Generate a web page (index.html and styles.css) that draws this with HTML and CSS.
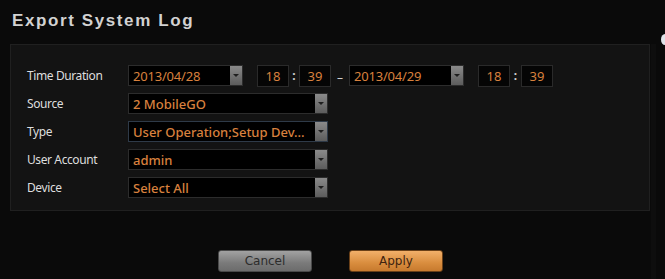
FILE: index.html
```html
<!DOCTYPE html>
<html>
<head>
<meta charset="utf-8">
<link rel="stylesheet" href="styles.css">
</head>
<body>
<div class="dialog">
  <h1 class="title">Export System Log</h1>
  <div class="panel">
    <div class="row">
      <div class="label">Time Duration</div>
      <div class="select date"><span class="val">2013/04/28</span><span class="arrow"></span></div>
      <div class="time first">18</div>
      <div class="colon">:</div>
      <div class="time">39</div>
      <div class="tilde">–</div>
      <div class="select date"><span class="val">2013/04/29</span><span class="arrow"></span></div>
      <div class="time first">18</div>
      <div class="colon wide-colon">:</div>
      <div class="time">39</div>
    </div>
    <div class="row">
      <div class="label">Source</div>
      <div class="select wide"><span class="val">2 MobileGO</span><span class="arrow"></span></div>
    </div>
    <div class="row">
      <div class="label">Type</div>
      <div class="select wide focus"><span class="val">User Operation;Setup Dev...</span><span class="arrow"></span></div>
    </div>
    <div class="row">
      <div class="label">User Account</div>
      <div class="select wide"><span class="val">admin</span><span class="arrow"></span></div>
    </div>
    <div class="row">
      <div class="label">Device</div>
      <div class="select wide"><span class="val">Select All</span><span class="arrow"></span></div>
    </div>
  </div>
  <div class="buttons">
    <button class="btn cancel">Cancel</button>
    <button class="btn apply">Apply</button>
  </div>
  <div class="edge"></div>
  <div class="corner"></div>
</div>
</body>
</html>
```
FILE: styles.css
```css
html, body {
  margin: 0;
  padding: 0;
  background: #0a0a0a;
}
.dialog {
  position: relative;
  width: 665px;
  height: 279px;
  overflow: hidden;
  font-family: "Noto Sans", "Open Sans", sans-serif;
}
.title {
  margin: 0;
  height: 44px;
  box-sizing: border-box;
  padding: 11px 0 0 12px;
  font-family: "Liberation Sans", Arial, sans-serif;
  font-weight: bold;
  font-size: 17px;
  letter-spacing: 1.6px;
  color: #d2d2d2;
  line-height: 20px;
}
.panel {
  margin-left: 10px;
  width: 640px;
  height: 167px;
  box-sizing: border-box;
  background: #131313;
  border: 1px solid #202020;
  padding: 20px 0 0 16px;
  display: flex;
  flex-direction: column;
  gap: 7px;
}
.row {
  display: flex;
  align-items: center;
  height: 21px;
}
.label {
  width: 101px;
  font-size: 12px;
  letter-spacing: -0.4px;
  color: #dedede;
}
.select {
  height: 21px;
  box-sizing: border-box;
  background: #000;
  border: 1px solid #2c2c2c;
  display: flex;
  align-items: center;
}
.select.focus {
  border-color: #2e3a48;
}
.select .val {
  flex: 1;
  padding-left: 4px;
  font-size: 13px;
  color: #d8813e;
  white-space: nowrap;
  overflow: hidden;
}
.select.date { width: 115px; }
.select.date .val { font-size: 13px; letter-spacing: -0.2px; }
.select.wide { width: 200px; }
.select.wide .val { font-weight: 500; }
.arrow {
  width: 12px;
  height: 19px;
  background: linear-gradient(#8a8a8a, #5c5c5c);
  position: relative;
}
.arrow::after {
  content: "";
  position: absolute;
  left: 3px;
  top: 8px;
  border-left: 3px solid transparent;
  border-right: 3px solid transparent;
  border-top: 3px solid #1e1e1e;
}
.time {
  width: 32px;
  height: 22px;
  box-sizing: border-box;
  background: #050505;
  border: 1px solid #2a2a2a;
  font-size: 13px;
  color: #d8813e;
  display: flex;
  align-items: center;
  justify-content: center;
}
.time.first { margin-left: 14px; }
.colon {
  width: 10px;
  text-align: center;
  font-size: 12px;
  font-weight: bold;
  color: #cfcfcf;
}
.wide-colon { width: 11px; }
.tilde {
  width: 18px;
  text-align: center;
  font-size: 12px;
  color: #cfcfcf;
  padding-top: 3px;
}
.buttons {
  display: flex;
  justify-content: flex-start;
  gap: 37px;
  padding: 39px 0 0 218px;
}
.btn {
  width: 94px;
  height: 22px;
  border-radius: 3px;
  font-family: "DejaVu Sans", sans-serif;
  font-size: 12px;
  padding: 0;
  line-height: 20px;
}
.cancel {
  background: linear-gradient(#a2a2a2, #7a7a7a 60%, #6c6c6c);
  border: 1px solid #4a4a4a;
  color: #2c2c2c;
}
.apply {
  background: linear-gradient(#f2b06a, #d98d3e 60%, #c77a2e);
  border: 1px solid #6a4018;
  color: #3e2410;
}
.edge {
  position: absolute;
  left: 651px;
  top: 44px;
  width: 5px;
  height: 235px;
  background: #0e0e0e;
}
.corner {
  position: absolute;
  left: 661px;
  top: 34px;
  width: 8px;
  height: 11px;
  border-radius: 50%;
  background: #dfe4ea;
}
```
